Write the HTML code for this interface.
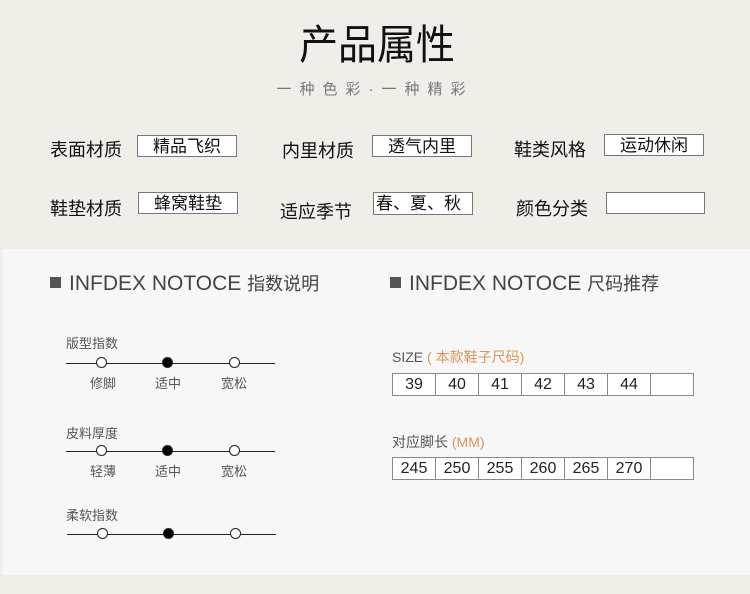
<!DOCTYPE html>
<html><head><meta charset="utf-8"><style>
*{margin:0;padding:0;box-sizing:border-box}
body{width:750px;height:594px;background:#f1eeea;position:relative;overflow:hidden;font-family:"Liberation Sans","Noto Sans CJK SC",sans-serif;color:#111}
.a{position:absolute;white-space:nowrap}
.lbl{font-size:18px;color:#111}
.box{position:absolute;border:1px solid #777;background:#fff;font-size:17px;text-align:center;line-height:22px;color:#111}
.panel{position:absolute;left:3px;top:249px;width:747px;height:326px;background:#f7f7f7}
.hd{font-size:21px;color:#444}
.sq{position:absolute;width:11px;height:11px;background:#555}
.sm{font-size:13px;color:#555}
.line{position:absolute;height:1px;background:#222}
.c{position:absolute;width:11px;height:11px;border:1px solid #222;border-radius:50%;background:#fff}
.c.f{background:#000}
table{position:absolute;border-collapse:collapse;background:#fff}
td{border:1px solid #888;width:43px;height:22px;text-align:center;font-size:16px;color:#222;padding:0}
</style></head><body>
<div class="a" style="left:0;width:754px;text-align:center;top:19px;font-size:41px;line-height:52px;color:#111;transform:scaleX(0.95)">产品属性</div>
<div class="a" style="left:0;width:750px;text-align:center;top:78px;font-size:15px;letter-spacing:8px;color:#777">一种色彩·一种精彩</div>

<div class="a lbl" style="left:50px;top:136px">表面材质</div>
<div class="box" style="left:137px;top:135px;width:100px;height:22px">精品飞织</div>
<div class="a lbl" style="left:282px;top:137px">内里材质</div>
<div class="box" style="left:372px;top:135px;width:100px;height:22px">透气内里</div>
<div class="a lbl" style="left:514px;top:136px">鞋类风格</div>
<div class="box" style="left:604px;top:134px;width:100px;height:22px">运动休闲</div>

<div class="a lbl" style="left:50px;top:195px">鞋垫材质</div>
<div class="box" style="left:138px;top:192px;width:100px;height:22px">蜂窝鞋垫</div>
<div class="a lbl" style="left:280px;top:198px">适应季节</div>
<div class="box" style="left:373px;top:192px;width:100px;height:23px;text-align:left;padding-left:2px">春、夏、秋</div>
<div class="a lbl" style="left:516px;top:195px">颜色分类</div>
<div class="box" style="left:606px;top:192px;width:99px;height:22px"></div>

<div class="panel"></div>
<div class="sq" style="left:50px;top:277px"></div>
<div class="a hd" style="left:69px;top:270px">INFDEX NOTOCE <span style="font-size:18px">指数说明</span></div>
<div class="sq" style="left:390px;top:277px"></div>
<div class="a hd" style="left:409px;top:270px">INFDEX NOTOCE <span style="font-size:18px">尺码推荐</span></div>

<div class="a sm" style="left:66px;top:333px">版型指数</div>
<div class="line" style="left:66px;top:363px;width:209px"></div>
<div class="c" style="left:96px;top:357px"></div><div class="c f" style="left:162px;top:357px"></div><div class="c" style="left:229px;top:357px"></div>
<div class="a sm" style="left:90px;top:373px">修脚</div><div class="a sm" style="left:155px;top:373px">适中</div><div class="a sm" style="left:221px;top:373px">宽松</div>

<div class="a sm" style="left:66px;top:423px">皮料厚度</div>
<div class="line" style="left:66px;top:451px;width:209px"></div>
<div class="c" style="left:96px;top:445px"></div><div class="c f" style="left:162px;top:445px"></div><div class="c" style="left:229px;top:445px"></div>
<div class="a sm" style="left:90px;top:461px">轻薄</div><div class="a sm" style="left:155px;top:461px">适中</div><div class="a sm" style="left:221px;top:461px">宽松</div>

<div class="a sm" style="left:66px;top:505px">柔软指数</div>
<div class="line" style="left:67px;top:534px;width:209px"></div>
<div class="c" style="left:97px;top:528px"></div><div class="c f" style="left:163px;top:528px"></div><div class="c" style="left:230px;top:528px"></div>

<div class="a" style="left:392px;top:347px;font-size:14px;color:#555">SIZE <span style="color:#d9955a">( 本款鞋子尺码)</span></div>
<table style="left:392px;top:373px"><tr><td>39</td><td>40</td><td>41</td><td>42</td><td>43</td><td>44</td><td></td></tr></table>
<div class="a" style="left:392px;top:432px;font-size:14px;color:#555">对应脚长 <span style="color:#d9955a">(MM)</span></div>
<table style="left:392px;top:457px"><tr><td>245</td><td>250</td><td>255</td><td>260</td><td>265</td><td>270</td><td></td></tr></table>
</body></html>
